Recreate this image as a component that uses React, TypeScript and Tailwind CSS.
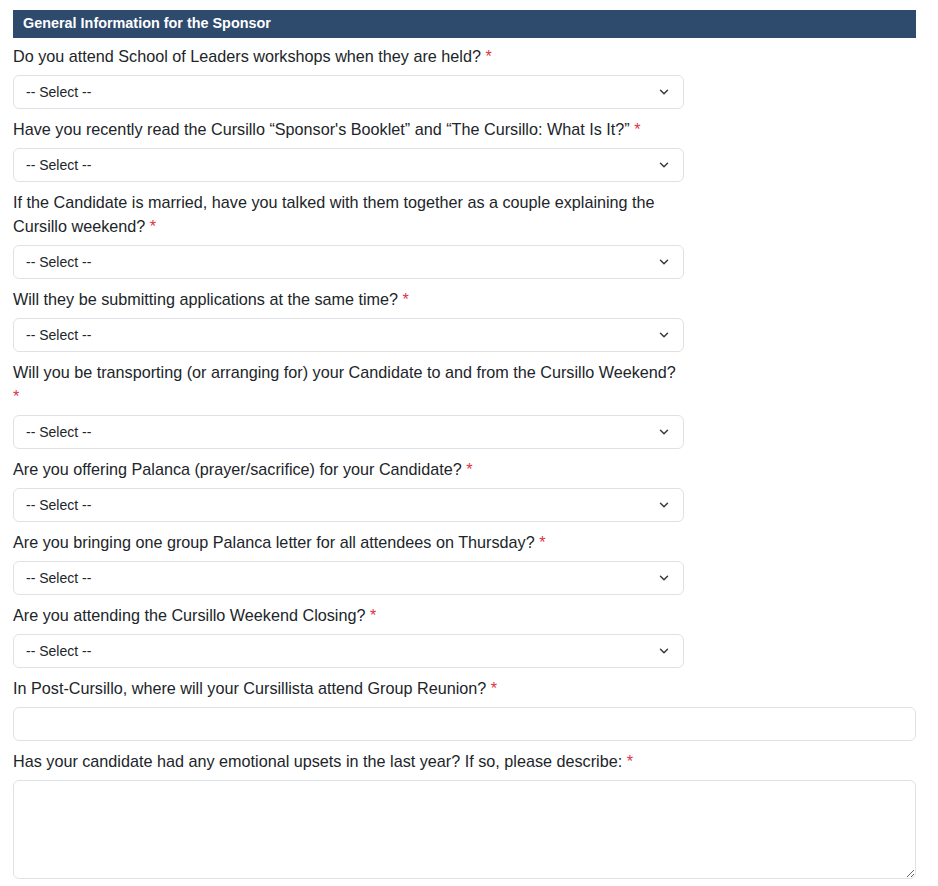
import { ChevronDown } from 'lucide-react'

const selectQuestions: string[] = [
  'Do you attend School of Leaders workshops when they are held?',
  'Have you recently read the Cursillo \u201cSponsor\'s Booklet\u201d and \u201cThe Cursillo: What Is It?\u201d',
  'If the Candidate is married, have you talked with them together as a couple explaining the Cursillo weekend?',
  'Will they be submitting applications at the same time?',
  'Will you be transporting (or arranging for) your Candidate to and from the Cursillo Weekend?',
  'Are you offering Palanca (prayer/sacrifice) for your Candidate?',
  'Are you bringing one group Palanca letter for all attendees on Thursday?',
  'Are you attending the Cursillo Weekend Closing?',
]

function Label({ text }: { text: string }) {
  return (
    <label className="block mb-[7px] text-[16.2px] leading-6 text-[#212529]">
      {text} <span className="text-[#dc3545]">*</span>
    </label>
  )
}

function SelectField({ text }: { text: string }) {
  return (
    <div className="w-[671px] mb-2">
      <Label text={text} />
      <div className="flex h-[34px] items-center justify-between rounded-md border border-[#dee2e6] bg-white pl-3 pr-3 text-sm text-[#212529]">
        <span>-- Select --</span>
        <ChevronDown size={14} strokeWidth={2.5} className="text-[#343a40]" />
      </div>
    </div>
  )
}

export default function App() {
  return (
    <div
      className="min-h-screen bg-white pl-[13px] pr-[22px] pt-[10px]"
      style={{ fontFamily: '"Liberation Sans", Arial, sans-serif' }}>
      <div className="mb-[6px] flex h-7 items-center bg-[#2e4a6d] px-[10px] text-[14.4px] font-bold text-white">
        General Information for the Sponsor
      </div>

      {selectQuestions.map((q) => (
        <SelectField key={q} text={q} />
      ))}

      <div className="mb-2">
        <Label text="In Post-Cursillo, where will your Cursillista attend Group Reunion?" />
        <input className="block h-[34px] w-full rounded-md border border-[#dee2e6] bg-white px-3 text-sm" />
      </div>

      <div>
        <Label text="Has your candidate had any emotional upsets in the last year? If so, please describe:" />
        <textarea className="block h-[99px] w-full rounded-md border border-[#dee2e6] bg-white px-3 py-1.5 text-sm" />
      </div>
    </div>
  )
}
